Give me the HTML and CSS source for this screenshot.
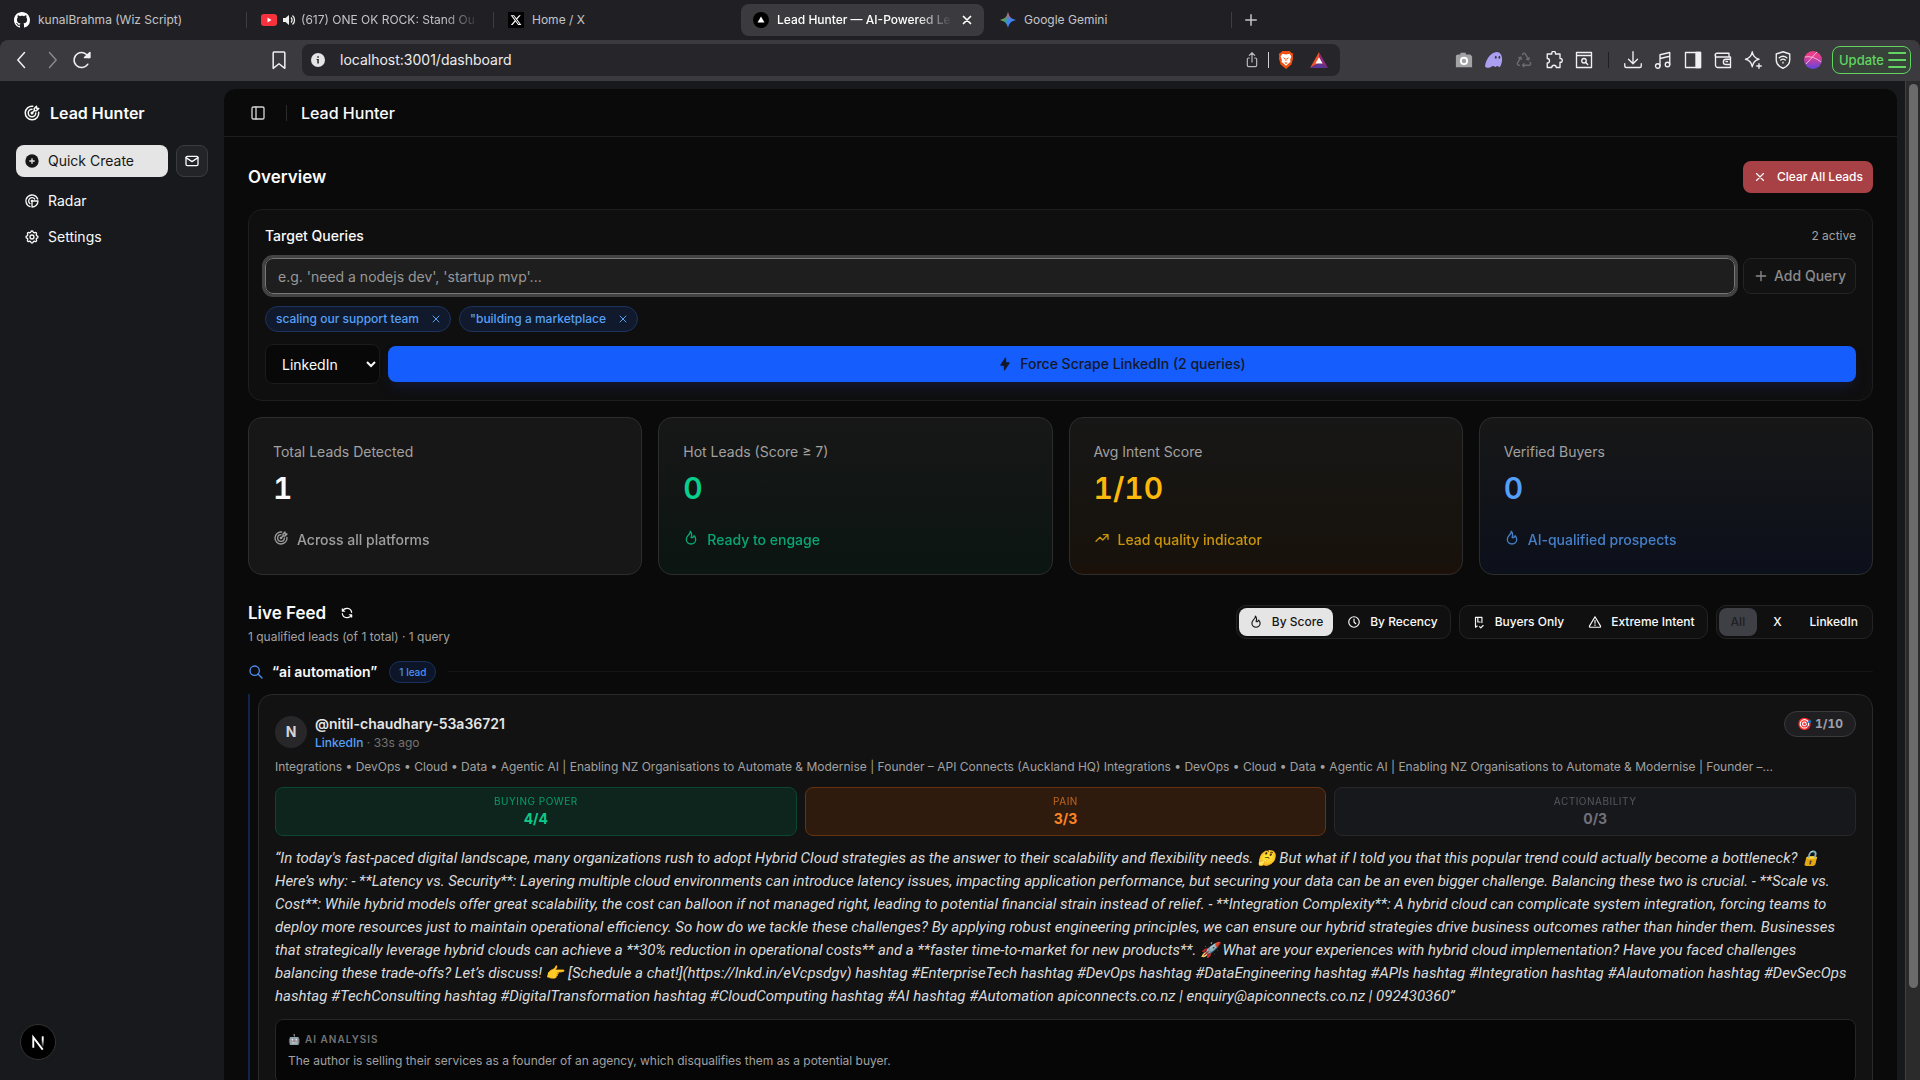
FILE: index.html
```html
<!DOCTYPE html>
<html lang="en">
<head>
<meta charset="utf-8">
<title>Lead Hunter — AI-Powered Leads</title>
<link rel="stylesheet" href="styles.css">
</head>
<body>
<svg class="defs" aria-hidden="true">
  <symbol id="target" viewBox="0 0 24 24"><circle cx="12" cy="12" r="1"/><path d="M12 7a5 5 0 1 0 5 5M13 3.055a9 9 0 1 0 7.941 7.945M15 6v3h3l3-3h-3v-3zM15 9l-3 3"/></symbol>
  <symbol id="radar" viewBox="0 0 24 24"><path d="M21 12h-8a1 1 0 1 0-1 1v8a9 9 0 0 0 9-9M16 9a5 5 0 1 0-7 7M20.486 9a9 9 0 1 0-11.482 11.495"/></symbol>
  <symbol id="gear" viewBox="0 0 24 24"><path d="M10.325 4.317c.426-1.756 2.924-1.756 3.35 0a1.724 1.724 0 0 0 2.573 1.066c1.543-.94 3.31.826 2.37 2.37a1.724 1.724 0 0 0 1.065 2.572c1.756.426 1.756 2.924 0 3.35a1.724 1.724 0 0 0-1.066 2.573c.94 1.543-.826 3.31-2.37 2.37a1.724 1.724 0 0 0-2.572 1.065c-.426 1.756-2.924 1.756-3.35 0a1.724 1.724 0 0 0-2.573-1.066c-1.543.94-3.31-.826-2.37-2.37a1.724 1.724 0 0 0-1.065-2.572c-1.756-.426-1.756-2.924 0-3.35a1.724 1.724 0 0 0 1.066-2.573c-.94-1.543.826-3.31 2.37-2.37c1 .608 2.296.07 2.572-1.065z"/><circle cx="12" cy="12" r="3"/></symbol>
  <symbol id="flame" viewBox="0 0 24 24"><path d="M12 10.941c2.333-3.308.167-7.823-1-8.941c0 3.395-2.235 5.299-3.667 6.706c-1.43 1.408-2.333 3.621-2.333 5.588c0 3.704 3.134 6.706 7 6.706s7-3.002 7-6.706c0-1.712-1.232-4.403-2.333-5.588c-2.084 3.353-3.257 3.353-4.667 2.235"/></symbol>
  <symbol id="trend" viewBox="0 0 24 24"><path d="M3 17l6-6l4 4l8-8M14 7h7v7"/></symbol>
  <symbol id="close" viewBox="0 0 24 24"><path d="M18 6L6 18M6 6l12 12"/></symbol>
  <symbol id="plus" viewBox="0 0 24 24"><path d="M12 5v14M5 12h14"/></symbol>
</svg>

<header class="browser">
  <nav class="tabs" aria-label="Tabs">
    <div class="tab divided">
      <svg class="fav" viewBox="0 0 16 16" fill="#fff"><path d="M8 0C3.58 0 0 3.58 0 8c0 3.54 2.29 6.53 5.47 7.59.4.07.55-.17.55-.38 0-.19-.01-.82-.01-1.49-2.01.37-2.53-.49-2.69-.94-.09-.23-.48-.94-.82-1.13-.28-.15-.68-.52-.01-.53.63-.01 1.08.58 1.23.82.72 1.21 1.87.87 2.33.66.07-.52.28-.87.51-1.07-1.78-.2-3.64-.89-3.64-3.95 0-.87.31-1.59.82-2.15-.08-.2-.36-1.02.08-2.12 0 0 .67-.21 2.2.82.64-.18 1.32-.27 2-.27s1.36.09 2 .27c1.53-1.04 2.2-.82 2.2-.82.44 1.1.16 1.92.08 2.12.51.56.82 1.27.82 2.15 0 3.07-1.87 3.75-3.65 3.95.29.25.54.73.54 1.48 0 1.07-.01 1.93-.01 2.2 0 .21.15.46.55.38A8.01 8.01 0 0 0 16 8c0-4.42-3.58-8-8-8z"/></svg>
      <span class="tab-title">kunalBrahma (Wiz Script)</span>
    </div>
    <div class="tab divided">
      <svg class="fav" viewBox="0 0 16 16"><rect y="2" width="16" height="12" rx="3" fill="#f8323c"/><path d="M6.5 5.5v5l4-2.500z" fill="#fff"/></svg>
      <svg class="speaker" viewBox="0 0 14 14"><path d="M1 5h2.500L7 2v10L3.500 9H1z" fill="#eee"/><path d="M9 4.500a3.500 3.500 0 0 1 0 5M10.500 2.500a6 6 0 0 1 0 9" fill="none" stroke="#eee" stroke-width="1.300"/></svg>
      <span class="tab-title fade">(617) ONE OK ROCK: Stand Ou</span>
    </div>
    <div class="tab">
      <svg class="fav" viewBox="0 0 16 16"><path d="M0 0h16v16H0z" fill="#000"/><g transform="translate(2 2) scale(.5)"><path d="M18.244 2.250h3.308l-7.227 8.260 8.502 11.240H16.170l-5.214-6.817L4.990 21.750H1.680l7.730-8.835L1.254 2.250H8.080l4.713 6.231zm-1.161 17.520h1.833L7.084 4.126H5.117z" fill="#fff"/></g></svg>
      <span class="tab-title">Home / X</span>
    </div>
    <div class="tab active">
      <svg class="fav" viewBox="0 0 16 16"><circle cx="8" cy="8" r="8" fill="#000"/><path d="M8 4.500l3.500 6h-7z" fill="#fff"/></svg>
      <span class="tab-title fade">Lead Hunter — AI-Powered Le</span>
      <button class="bare" aria-label="Close tab"><svg class="line bold s14"><use href="#close"/></svg></button>
    </div>
    <div class="tab divided">
      <svg class="fav" viewBox="0 0 16 16"><defs><linearGradient id="gem" x1="0" y1="0" x2="1" y2=".3"><stop offset="0" stop-color="#f6c344"/><stop offset=".4" stop-color="#3fa66b"/><stop offset=".65" stop-color="#3b83f6"/></linearGradient><linearGradient id="gem2" x1="0" y1="0" x2="0" y2="1"><stop offset="0" stop-color="#ee4d5d"/><stop offset=".5" stop-color="#ee4d5d" stop-opacity="0"/></linearGradient></defs><path d="M8 0c.8 4.500 3.500 7.200 8 8c-4.500.8-7.200 3.500-8 8c-.8-4.500-3.500-7.200-8-8c4.500-.8 7.200-3.500 8-8z" fill="url(#gem)"/><path d="M8 0c.8 4.500 3.500 7.200 8 8c-4.500.8-7.200 3.500-8 8c-.8-4.500-3.500-7.200-8-8c4.500-.8 7.200-3.500 8-8z" fill="url(#gem2)"/></svg>
      <span class="tab-title">Google Gemini</span>
    </div>
    <button class="bare new-tab" aria-label="New tab"><svg class="line s18"><use href="#plus"/></svg></button>
  </nav>
  <div class="toolbar">
    <div class="nav-buttons">
      <button class="bare" aria-label="Back"><svg class="line s20" viewBox="0 0 24 24"><path d="M15 3l-8 9l8 9"/></svg></button>
      <button class="bare dim" aria-label="Forward"><svg class="line s20" viewBox="0 0 24 24"><path d="M9 3l8 9l-8 9"/></svg></button>
      <button class="bare" aria-label="Reload"><svg class="line s20" viewBox="0 0 24 24"><path d="M19 17a9 9 0 1 1 1-8"/><path d="M15 9h6.500V3z" fill="currentColor"/></svg></button>
    </div>
    <button class="bare bookmark" aria-label="Bookmark"><svg class="line s20" viewBox="0 0 24 24"><path d="M6 2.500h12a1 1 0 0 1 1 1V22l-7-5.500L5 22V3.500a1 1 0 0 1 1-1z"/></svg></button>
    <div class="address">
      <svg class="s14" viewBox="0 0 14 14"><circle cx="7" cy="7" r="7" fill="#e4e4e6"/><path d="M6.300 3.300h1.500v1.500H6.300zM5.600 6h2.200v4.500H6.300V7h-.7z" fill="#26262a"/></svg>
      <input class="url" aria-label="Address" value="localhost:3001/dashboard">
      <svg class="line s16 soft" viewBox="0 0 24 24"><path d="M8 9H7a2 2 0 0 0-2 2v9a2 2 0 0 0 2 2h10a2 2 0 0 0 2-2v-9a2 2 0 0 0-2-2h-1M12 15V2M8 5l4-4l4 4"/></svg>
      <span class="addr-sep"></span>
      <svg class="s18" viewBox="0 0 18 20"><path d="M5 0h8l2 2 2 1-.5 3 .5 2-2 7-6 5-6-5-2-7 .5-2L1 3l2-1z" fill="#f0500f"/><path d="M5 3l4 1 4-1 2 3-1.500 4 .5 2-5 4.500L4 12l.5-2L3 6z" fill="#fff"/><path d="M5.500 7l2.500 1-.5 1.500zM12.500 7L10 8l.5 1.500zM7 12l2 1 2-1-2 3zM8.500 8h1v3h-1z" fill="#f0500f"/></svg>
      <svg class="s18 bat" viewBox="0 0 20 18"><path d="M10 0L0 18l10-6z" fill="#f0502c"/><path d="M10 0l10 18-10-6z" fill="#8b2d7c"/><path d="M0 18h20l-10-6z" fill="#5c3596"/><path d="M10 6l4 7H6z" fill="#fff"/></svg>
    </div>
    <div class="extensions">
      <svg class="s18" viewBox="0 0 20 20"><path d="M6 4V2h6v2h5l2 2v12H1V5l2-1z" fill="#a3a3a6"/><circle cx="10" cy="11" r="3.500" fill="none" stroke="#fff" stroke-width="2"/></svg>
      <svg class="s18" viewBox="0 0 20 20"><path d="M19 9c0 5-2 9-3 9s-1.500-2-3-1-2 1-3 0-2 0-4 1-5 1-6-1C1 9 6 2 13 1c4 0 6 4 6 8z" fill="#ab9ff2"/><ellipse cx="12" cy="7" rx="1" ry="1.700" fill="#3b3b3f"/><ellipse cx="16" cy="7" rx="1" ry="1.700" fill="#3b3b3f"/></svg>
      <svg class="line s18 faint" viewBox="0 0 24 24"><path d="M12 17l-2 2l2 2M10 19h9a2 2 0 0 0 1.750-2.750l-.55-1M8.536 11l-.732-2.732L5.072 9M7.804 8.268l-4.500 7.794a2 2 0 0 0 1.506 2.890l1.141.024M15.464 11l2.732.732L18.928 9M18.196 11.732l-4.500-7.794a2 2 0 0 0-3.256-.14l-.591.976"/></svg>
      <svg class="line s18" viewBox="0 0 24 24"><path d="M3 4h6V3a2.500 2.500 0 0 1 5 0v1h6v6h.5a2.500 2.500 0 0 1 0 5H20v7h-5a3 3 0 0 0-6 0H3v-6a3 3 0 0 0 0-6z"/></svg>
      <svg class="line s18" viewBox="0 0 24 24"><path d="M2 2h20v20H2zM2 6h20"/><circle cx="12" cy="13" r="3"/><path d="M14 15l3 3"/></svg>
      <span class="ext-sep"></span>
      <svg class="line s18" viewBox="0 0 24 24"><path d="M12 1v15M6 11l6 6l6-6M1 17v3a2 2 0 0 0 2 2h18a2 2 0 0 0 2-2v-3"/></svg>
      <svg class="line s18" viewBox="0 0 24 24"><circle cx="5" cy="20" r="3"/><circle cx="18" cy="18" r="3"/><path d="M8 20V5l13-3v16M8 10l13-3"/></svg>
      <svg class="line s18" viewBox="0 0 24 24"><path d="M2 2h20v20H2z"/><path d="M16 2h6v20h-6z" fill="currentColor"/></svg>
      <svg class="line s18" viewBox="0 0 24 24"><path d="M20 7V3H4a2 2 0 0 0 0 5h18v14H5a3 3 0 0 1-3-3V5M22 11h-6a3 3 0 0 0 0 7h6M16 14h2"/></svg>
      <svg class="line s18" viewBox="0 0 24 24"><path d="M11 1c1 6 4 9 9 10-5 1-8 4-9 10-1-6-4-9-9-10 5-1 8-4 9-10zM20 17v6M17 20h6"/></svg>
      <svg class="line s18" viewBox="0 0 24 24"><path d="M12 1l9 3v8c0 5-4 9-9 11c-5-2-9-6-9-11V4zM7 9c3-2.500 7-2.500 10 0M9 12c2-1.500 4-1.500 6 0M12 16v-1"/></svg>
      <svg class="s18" viewBox="0 0 18 18"><defs><linearGradient id="ball" x2="0" y2="1"><stop offset=".3" stop-color="#e83e8c"/><stop offset="1" stop-color="#5b45e0"/></linearGradient></defs><circle cx="9" cy="9" r="9" fill="url(#ball)"/><path d="M1 6c6-1 11 1 16 5M2 13L13 1" stroke="#f7b6dc" fill="none"/></svg>
      <button class="update">Update<svg class="line s18" viewBox="0 0 18 18"><path d="M1 2h17M1 9h17M1 16h17"/></svg></button>
    </div>
  </div>
</header>

<div class="viewport">
  <aside class="sidebar">
    <a class="brand" href="#"><svg class="line s18"><use href="#target"/></svg>Lead Hunter</a>
    <div class="create-row">
      <button class="quick"><svg class="s16" viewBox="0 0 24 24"><circle cx="12" cy="12" r="10" fill="#171717"/><path d="M12 8v8M8 12h8" stroke="#e5e5e5" stroke-width="2"/></svg>Quick Create</button>
      <button class="mail" aria-label="Inbox"><svg class="line s16" viewBox="0 0 24 24"><rect x="3" y="5" width="18" height="14" rx="2"/><path d="M3 7l9 6l9-6"/></svg></button>
    </div>
    <a class="side-link" href="#"><svg class="line s16"><use href="#radar"/></svg>Radar</a>
    <a class="side-link" href="#"><svg class="line s16"><use href="#gear"/></svg>Settings</a>
    <button class="next-badge" aria-label="Open Next.js dev tools"><svg viewBox="0 0 36 36"><defs><linearGradient id="nfade" gradientUnits="userSpaceOnUse" x1="0" y1="12" x2="0" y2="24"><stop offset=".3" stop-color="#fff"/><stop offset="1" stop-color="#fff" stop-opacity="0"/></linearGradient></defs><path d="M13 24V13l10 13" fill="none" stroke="#fff" stroke-width="2"/><path d="M23 12v11" stroke="url(#nfade)" stroke-width="2"/></svg></button>
  </aside>

  <main class="inset">
    <header class="page-head">
      <button class="bare" aria-label="Toggle sidebar"><svg class="line s16" viewBox="0 0 24 24"><rect x="3" y="3" width="18" height="18" rx="2"/><path d="M9 3v18"/></svg></button>
      <span class="head-sep"></span>
      <h1>Lead Hunter</h1>
    </header>

    <div class="content">
      <div class="title-row">
        <h2>Overview</h2>
        <button class="clear"><svg class="line s14"><use href="#close"/></svg>Clear All Leads</button>
      </div>

      <section class="queries">
        <div class="between"><label class="q-title" for="query">Target Queries</label><span class="note">2 active</span></div>
        <div class="query-row">
          <input id="query" class="query" placeholder="e.g. 'need a nodejs dev', 'startup mvp'...">
          <button class="add"><svg class="line s16"><use href="#plus"/></svg>Add Query</button>
        </div>
        <div class="tags">
          <span class="tag">scaling our support team<button class="bare" aria-label="Remove"><svg class="line s12"><use href="#close"/></svg></button></span>
          <span class="tag">"building a marketplace<button class="bare" aria-label="Remove"><svg class="line s12"><use href="#close"/></svg></button></span>
        </div>
        <div class="scrape-row">
          <select class="platform" aria-label="Platform"><option>LinkedIn</option><option>X</option></select>
          <button class="scrape"><svg class="s14" viewBox="0 0 24 24"><path d="M13 2v8h6l-8 12v-8H5z" fill="currentColor" stroke="currentColor" stroke-width="2" stroke-linejoin="round"/></svg>Force Scrape LinkedIn (2 queries)</button>
        </div>
      </section>

      <section class="stats">
        <article class="stat plain"><p class="stat-label">Total Leads Detected</p><p class="stat-value">1</p><p class="stat-foot"><svg class="line s16"><use href="#target"/></svg>Across all platforms</p></article>
        <article class="stat green"><p class="stat-label">Hot Leads (Score ≥ 7)</p><p class="stat-value">0</p><p class="stat-foot"><svg class="line s16"><use href="#flame"/></svg>Ready to engage</p></article>
        <article class="stat amber"><p class="stat-label">Avg Intent Score</p><p class="stat-value">1/10</p><p class="stat-foot"><svg class="line s16"><use href="#trend"/></svg>Lead quality indicator</p></article>
        <article class="stat blue"><p class="stat-label">Verified Buyers</p><p class="stat-value">0</p><p class="stat-foot"><svg class="line s16"><use href="#flame"/></svg>AI-qualified prospects</p></article>
      </section>

      <div class="feed-head">
        <div>
          <div class="feed-title"><h2>Live Feed</h2><button class="bare" aria-label="Refresh"><svg class="line s14" viewBox="0 0 24 24"><path d="M20 11a8.100 8.100 0 0 0-15.500-2m-.5-4v4h4M4 13a8.100 8.100 0 0 0 15.500 2m.5 4v-4h-4"/></svg></button></div>
          <p class="note">1 qualified leads (of 1 total) · 1 query</p>
        </div>
        <div class="filters">
          <div class="group">
            <button class="chip on"><svg class="line s14"><use href="#flame"/></svg>By Score</button>
            <button class="chip"><svg class="line s14" viewBox="0 0 24 24"><circle cx="12" cy="12" r="9"/><path d="M12 7v5l3 3"/></svg>By Recency</button>
          </div>
          <div class="group">
            <button class="chip"><svg class="line s14" viewBox="0 0 24 24"><path d="M6 20V4h11v9M6 21l3-2M10 4v8h4M13 20l2 2l4-4"/></svg>Buyers Only</button>
            <button class="chip"><svg class="line s14" viewBox="0 0 24 24"><path d="M12 3L2.500 19a1.500 1.500 0 0 0 1.300 2h16.400a1.500 1.500 0 0 0 1.300-2zM12 9v5M12 17v1"/></svg>Extreme Intent</button>
          </div>
          <div class="group">
            <button class="chip text picked">All</button>
            <button class="chip text">X</button>
            <button class="chip text">LinkedIn</button>
          </div>
        </div>
      </div>

      <div class="topic">
        <svg class="line s16" viewBox="0 0 24 24"><circle cx="10" cy="10" r="7"/><path d="M21 21l-6-6"/></svg>
        <h3>“ai automation”</h3><span class="count">1 lead</span><span class="rule"></span>
      </div>

      <div class="thread">
        <article class="lead">
          <div class="lead-head">
            <span class="avatar">N</span>
            <div class="who"><p class="handle">@nitil-chaudhary-53a36721</p><p class="meta"><a href="#">LinkedIn</a> · 33s ago</p></div>
            <span class="score">🎯 1/10</span>
          </div>
          <p class="headline">Integrations • DevOps • Cloud • Data • Agentic AI | Enabling NZ Organisations to Automate &amp; Modernise | Founder – API Connects (Auckland HQ) Integrations • DevOps • Cloud • Data • Agentic AI | Enabling NZ Organisations to Automate &amp; Modernise | Founder –...</p>
          <div class="meters">
            <div class="meter power"><span>BUYING POWER</span><strong>4/4</strong></div>
            <div class="meter pain"><span>PAIN</span><strong>3/3</strong></div>
            <div class="meter action"><span>ACTIONABILITY</span><strong>0/3</strong></div>
          </div>
          <p class="quote">“In today's fast-paced digital landscape, many organizations rush to adopt Hybrid Cloud strategies as the answer to their scalability and flexibility needs. 🤔 But what if I told you that this popular trend could actually become a bottleneck? 🔒<br>
          Here’s why: - **Latency vs. Security**: Layering multiple cloud environments can introduce latency issues, impacting application performance, but securing your data can be an even bigger challenge. Balancing these two is crucial. - **Scale vs.<br>
          Cost**: While hybrid models offer great scalability, the cost can balloon if not managed right, leading to potential financial strain instead of relief. - **Integration Complexity**: A hybrid cloud can complicate system integration, forcing teams to<br>
          deploy more resources just to maintain operational efficiency. So how do we tackle these challenges? By applying robust engineering principles, we can ensure our hybrid strategies drive business outcomes rather than hinder them. Businesses<br>
          that strategically leverage hybrid clouds can achieve a **30% reduction in operational costs** and a **faster time-to-market for new products**. 🚀 What are your experiences with hybrid cloud implementation? Have you faced challenges<br>
          balancing these trade-offs? Let’s discuss! 👉 [Schedule a chat!](https://lnkd.in/eVcpsdgv) hashtag #EnterpriseTech hashtag #DevOps hashtag #DataEngineering hashtag #APIs hashtag #Integration hashtag #AIautomation hashtag #DevSecOps<br>
          hashtag #TechConsulting hashtag #DigitalTransformation hashtag #CloudComputing hashtag #AI hashtag #Automation apiconnects.co.nz | enquiry@apiconnects.co.nz | 092430360”</p>
          <div class="analysis"><h4>🤖 AI ANALYSIS</h4><p>The author is selling their services as a founder of an agency, which disqualifies them as a potential buyer.</p></div>
        </article>
      </div>
    </div>
  </main>
  <div class="scrollbar" aria-hidden="true"><span class="thumb"></span></div>
</div>
</body>
</html>
```
FILE: styles.css
```css
* { box-sizing: border-box; margin: 0; padding: 0; }
body {
  display: flex; flex-direction: column; height: 100vh; overflow: hidden;
  background: #202024; color: #fafafa; color-scheme: dark;
  font: 14px/20px Inter, "Noto Sans", "Noto Color Emoji", sans-serif;
}
button, input, select { font: inherit; color: inherit; }
button { border: 0; cursor: pointer; white-space: nowrap; }
a { color: inherit; text-decoration: none; }
svg { display: block; flex: none; }
.defs { display: none; }
.line { fill: none; stroke: currentColor; stroke-width: 2; stroke-linecap: round; stroke-linejoin: round; }
.bold { stroke-width: 3; }
.s12 { width: 12px; height: 12px; }
.s14 { width: 14px; height: 14px; }
.s16 { width: 16px; height: 16px; }
.s18 { width: 18px; height: 18px; }
.s20 { width: 20px; height: 20px; }
.bare { display: flex; align-items: center; background: none; }

/* Browser frame */
.browser { flex: none; }
.tabs { display: flex; align-items: center; height: 40px; font-size: 12px; line-height: 16px; color: #c4c4c8; }
.tab { position: relative; display: flex; align-items: center; gap: 8px; width: 247px; height: 32px; padding: 0 14px; }
.tab.divided::after { content: ""; position: absolute; right: 0; top: 8px; width: 1px; height: 16px; background: #3d3d42; }
.tab.active { width: 243px; margin-right: 4px; padding: 0 10px 0 12px; border-radius: 8px; background: #3b3b3f; color: #fff; font-weight: 500; }
.tab.active + .tab { width: 244px; padding: 0 12px; }
.fav { width: 16px; height: 16px; }
.speaker { width: 14px; height: 14px; margin: 0 -3px; }
.tab-title { flex: 1; white-space: nowrap; }
.tab-title.fade { mask-image: linear-gradient(to right, #000 calc(100% - 36px), transparent); }
.new-tab { margin-left: 10px; }
.toolbar { display: flex; align-items: center; height: 41px; padding: 0 9px 1px 12px; border-radius: 8px 8px 0 0; background: #3b3b3f; color: #f0f0f2; }
.toolbar .line { stroke-width: 1.8; }
.nav-buttons { display: flex; gap: 10px; width: 257px; }
.dim { color: #88888c; }
.bookmark { margin-right: 13px; }
.address { display: flex; align-items: center; flex: 1; gap: 12px; height: 32px; padding: 0 12px 0 9px; border-radius: 8px; background: #26262a; }
.url { flex: 1; min-width: 0; margin-left: 3px; border: 0; outline: 0; background: none; color: #ececee; }
.soft { color: #b9b9bd; }
.addr-sep { width: 1px; height: 16px; margin: 0 -4px; background: #d0d0d3; }
.bat { margin-left: 3px; }
.extensions { display: flex; align-items: center; gap: 12px; margin-left: 115px; }
.faint { color: #6c6c70; }
.ext-sep { width: 1px; height: 16px; margin: 0 3px; background: #202024; }
.update { display: flex; align-items: center; gap: 4px; height: 28px; margin-left: -2px; padding: 0 4px 0 6px; border: 1px solid #63d463; border-radius: 8px; background: #374238; color: #62d562; font-weight: 500; font-size: 13px; }

/* App shell */
.viewport { display: flex; flex: 1; min-height: 0; background: #18191c; }
.sidebar { display: flex; flex-direction: column; flex: none; width: 224px; padding: 16px; }
.brand { display: flex; align-items: center; gap: 9px; height: 32px; padding-left: 7px; margin-bottom: 16px; font-size: 16px; font-weight: 600; }
.create-row { display: flex; gap: 8px; margin-bottom: 8px; }
.quick { display: flex; align-items: center; gap: 8px; flex: 1; height: 32px; padding: 0 8px; border-radius: 8px; background: #e5e5e5; color: #171717; }
.mail { display: grid; place-items: center; width: 32px; height: 32px; border: 1px solid #3c3c3f; border-radius: 8px; background: #232427; }
.side-link { display: flex; align-items: center; gap: 8px; height: 32px; margin-bottom: 4px; padding: 0 8px; }
.next-badge { width: 36px; height: 36px; margin: auto 0 4px 4px; border: 1px solid #333; border-radius: 50%; background: #000; }
.next-badge svg { width: 34px; height: 34px; }
.inset { flex: 1; min-width: 0; margin: 8px 8px 0 0; border-radius: 12px 12px 0 0; background: #0a0a0a; overflow: hidden; }
.scrollbar { width: 15px; padding: 3px; border-left: 1px solid #414143; background: #2b2b2c; }
.thumb { display: block; width: 9px; height: 91%; border-radius: 5px; background: #6b6b6b; }
.page-head { display: flex; align-items: center; gap: 14px; height: 48px; padding: 0 26px; border-bottom: 1px solid #1d1d1d; }
.page-head .bare { color: #d4d4d4; }
.head-sep { width: 1px; height: 16px; margin-left: 6px; background: #2b2b2b; }
h1 { font-size: 16px; line-height: 24px; font-weight: 500; }
.content { padding: 24px; }
h2 { font-size: 17px; line-height: 28px; font-weight: 600; }
.title-row, .between, .feed-head { display: flex; align-items: center; justify-content: space-between; }
.title-row { margin-bottom: 16px; }
.note { font-size: 12px; line-height: 16px; color: #a1a1a1; }
.clear { display: flex; align-items: center; gap: 10px; height: 32px; padding: 0 10px; border-radius: 8px; background: #a84145; color: #fff; font-size: 12px; font-weight: 500; }

/* Query panel */
.queries { display: flex; flex-direction: column; gap: 12px; padding: 16px; border: 1px solid #1e1e1e; border-radius: 14px; background: #0f0f0f; }
.q-title { font-weight: 500; }
.query-row, .scrape-row, .tags { display: flex; align-items: center; gap: 8px; }
.query { flex: 1; min-width: 0; height: 36px; padding: 0 12px; border: 1px solid #777; border-radius: 8px; outline: 3px solid #434343; background: #1e1e1e; }
.query::placeholder { color: #989898; opacity: 1; }
.add { display: flex; align-items: center; gap: 5px; height: 36px; padding: 0 9px; border: 1px solid #242424; border-radius: 8px; background: #121212; color: #8b8b8b; font-weight: 500; }
.tag { display: flex; align-items: center; gap: 11px; height: 26px; padding: 0 8px 0 10px; border: 1px solid #1c3360; border-radius: 13px; background: #101a2c; color: #57a0f6; font-size: 12px; font-weight: 500; }
.platform { width: 115px; height: 40px; padding: 0 12px; border: 1px solid #1b1b1b; border-radius: 8px; background: #080808; }
.scrape { display: flex; align-items: center; justify-content: center; gap: 8px; flex: 1; height: 36px; border-radius: 8px; background: #155dfc; color: #14182a; font-weight: 500; box-shadow: 0 8px 14px -4px rgb(28 40 120 / 40%); }

/* Stats */
.stats { display: grid; grid-template-columns: repeat(4, 1fr); gap: 16px; margin: 16px 0 24px; }
.stat { display: flex; flex-direction: column; height: 158px; padding: 24px; border: 1px solid #2d2d2d; border-radius: 14px; background: #171717; color: #fafafa; }
.stat-label { color: #a1a1a1; }
.stat-value { margin: 8px 0 24px; font-size: 30px; line-height: 36px; font-weight: 600; font-variant-numeric: tabular-nums; }
.stat-foot { display: flex; gap: 8px; font-weight: 500; opacity: .78; }
.plain .stat-foot { color: #c4c4c4; }
.green { background: linear-gradient(#171717, #0b1512); }
.green .stat-value, .green .stat-foot { color: #08cf8e; }
.amber { background: linear-gradient(#171717, #17120b 94%, #1d1008); }
.amber .stat-value, .amber .stat-foot { color: #fcb90c; }
.blue { background: linear-gradient(#171717, #0c101b); }
.blue .stat-value, .blue .stat-foot { color: #559ff8; }

/* Feed */
.feed-title { display: flex; align-items: center; gap: 14px; margin-bottom: 2px; }
.filters { display: flex; gap: 8px; }
.group { display: flex; gap: 4px; padding: 2px; border: 1px solid #232323; border-radius: 10px; background: #101010; }
.chip { display: flex; align-items: center; gap: 9px; height: 28px; padding: 0 10px; border-radius: 8px; background: none; font-size: 12px; font-weight: 500; }
.chip.text { padding: 0 12px; }
.chip.on { background: #e5e5e5; color: #171717; }
.chip.picked { background: #3f3f46; color: #202022; }
.topic { display: flex; align-items: center; gap: 8px; height: 21px; margin: 16px 0 12px; color: #4c8ff0; }
h3 { color: #fafafa; font-size: 14px; line-height: 20px; font-weight: 600; }
.count { margin: 0 4px; padding: 0 9px; border: 1px solid #1b305a; border-radius: 11px; background: #0d1629; font-size: 10px; font-weight: 500; }
.rule { flex: 1; height: 1px; background: #151515; }
.thread { padding-left: 8px; border-left: 2px solid #12244b; }
.lead { padding: 16px; border: 1px solid #2a2a2a; border-radius: 14px; background: #121212; }
.lead-head { display: flex; align-items: center; gap: 8px; height: 42px; }
.avatar { display: grid; place-items: center; width: 32px; height: 32px; border-radius: 50%; background: #27272a; color: #d4d4d8; font-weight: 700; }
.who { flex: 1; padding-top: 2px; }
.handle { font-weight: 600; line-height: 20px; color: #e5e5e5; }
.meta { font-size: 12px; line-height: 18px; color: #737373; }
.meta a { color: #559ff8; font-weight: 500; }
.score { align-self: flex-start; padding: 2px 12px; border: 1px solid #3b3b3f; border-radius: 13px; background: #1f1f22; color: #9f9fa9; font-size: 12px; font-weight: 700; font-variant-numeric: tabular-nums; }
.headline { margin: 6px 0 12px; overflow: hidden; white-space: nowrap; text-overflow: ellipsis; font-size: 12px; line-height: 16px; color: #a1a1a1; }
.meters { display: grid; grid-template-columns: repeat(3, 1fr); gap: 8px; }
.meter { display: flex; flex-direction: column; align-items: center; height: 49px; padding: 6px; border: 1px solid; border-radius: 8px; }
.meter span { font-size: 10px; line-height: 15px; letter-spacing: .05em; opacity: .7; }
.meter strong { font-weight: 700; }
.power { border-color: #0a4633; background: #0d251d; color: #0cca8b; }
.pain { border-color: #663210; background: #2f1b0e; color: #fb8524; }
.action { border-color: #27272a; background: #17181b; color: #71717b; }
.quote { margin: 11px 0; font-family: Roboto, "Noto Color Emoji", sans-serif; font-size: 15px; font-style: italic; line-height: 23px; white-space: nowrap; color: #dadada; }
.analysis { padding: 12px; border: 1px solid #262626; border-radius: 8px; background: #060606; }
.analysis h4 { margin-bottom: 4px; font-size: 10px; line-height: 15px; font-weight: 600; letter-spacing: .1em; color: #737373; }
.analysis p { font-size: 12px; line-height: 20px; color: #a1a1a1; }
```
